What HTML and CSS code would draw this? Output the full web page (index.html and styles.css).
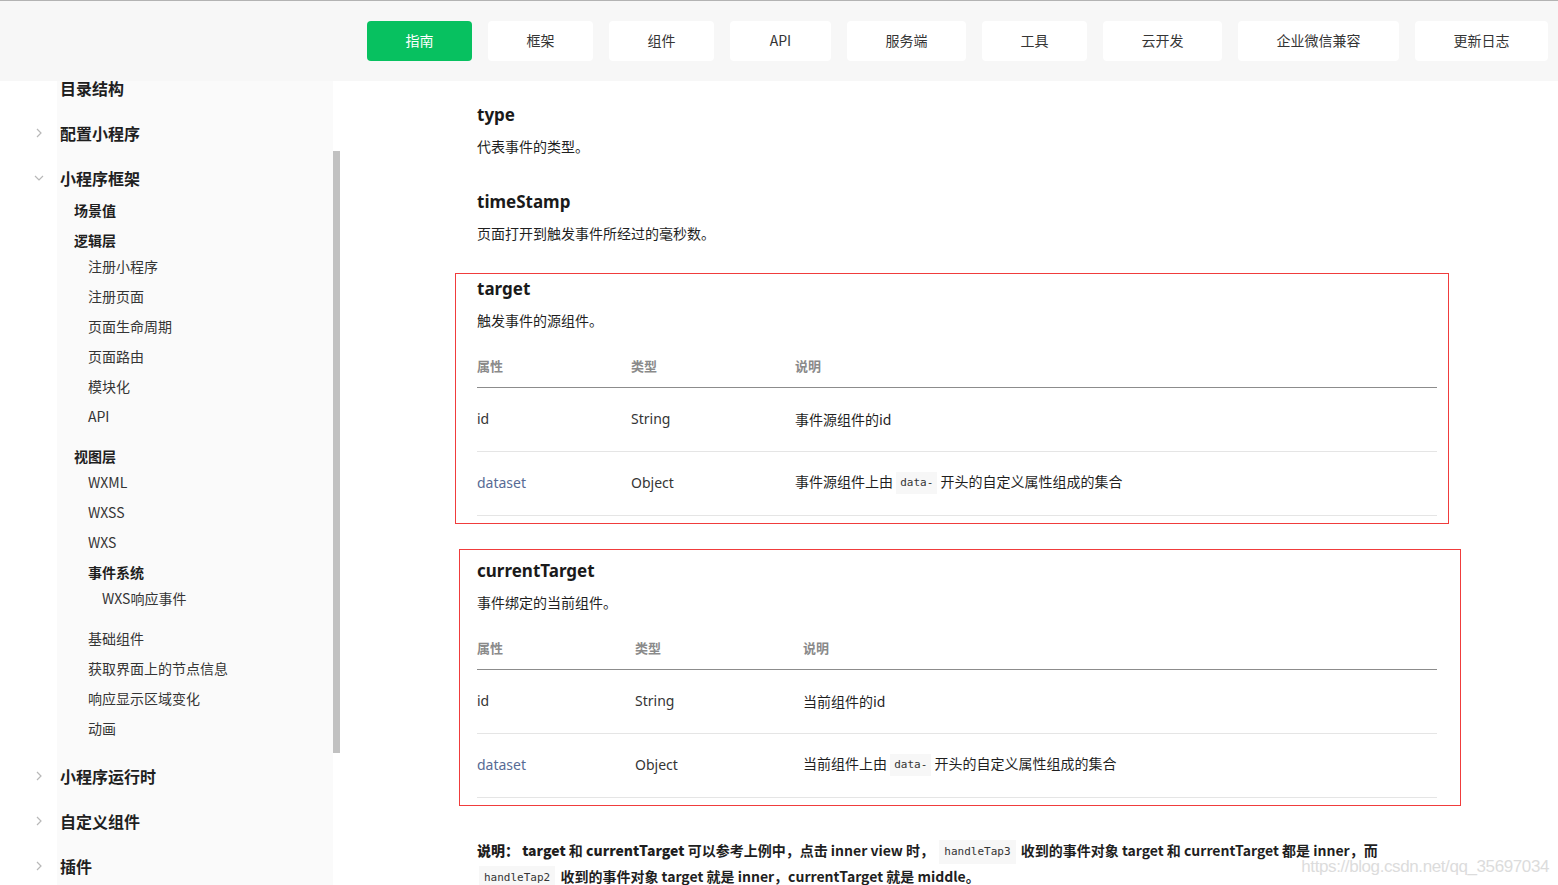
FILE: index.html
```html
<!DOCTYPE html>
<html lang="zh-CN">
<head>
<meta charset="utf-8">
<title>事件 | 微信开放文档</title>
<link rel="stylesheet" href="styles.css">
</head>
<body>
<div class="topline"></div>
<header class="header">
  <nav class="nav">
    <a class="nav-btn is-active">指南</a>
    <a class="nav-btn">框架</a>
    <a class="nav-btn">组件</a>
    <a class="nav-btn">API</a>
    <a class="nav-btn">服务端</a>
    <a class="nav-btn">工具</a>
    <a class="nav-btn">云开发</a>
    <a class="nav-btn">企业微信兼容</a>
    <a class="nav-btn">更新日志</a>
  </nav>
</header>

<div class="layout">
  <aside class="sidebar">
    <ul class="toc">
      <li class="toc-top"><span class="chev-slot"></span>目录结构</li>
      <li class="toc-top"><span class="chev-slot"><svg width="6" height="10" viewBox="0 0 6 10"><polyline points="1,1 5,5 1,9" fill="none" stroke="#b8b8b8" stroke-width="1.2"/></svg></span>配置小程序</li>
      <li>
        <div class="toc-top"><span class="chev-slot chev-down"><svg width="10" height="6" viewBox="0 0 10 6"><polyline points="1,1 5,5 9,1" fill="none" stroke="#b8b8b8" stroke-width="1.2"/></svg></span>小程序框架</div>
        <ul class="toc-sub">
          <li class="toc-row lvl2 strong">场景值</li>
          <li class="toc-group">
            <div class="toc-row lvl2 strong head">逻辑层</div>
            <ul>
              <li class="toc-row lvl3">注册小程序</li>
              <li class="toc-row lvl3">注册页面</li>
              <li class="toc-row lvl3">页面生命周期</li>
              <li class="toc-row lvl3">页面路由</li>
              <li class="toc-row lvl3">模块化</li>
              <li class="toc-row lvl3">API</li>
            </ul>
          </li>
          <li class="toc-group">
            <div class="toc-row lvl2 strong head">视图层</div>
            <ul>
              <li class="toc-row lvl3">WXML</li>
              <li class="toc-row lvl3">WXSS</li>
              <li class="toc-row lvl3">WXS</li>
              <li class="toc-group">
                <div class="toc-row lvl3 strong head">事件系统</div>
                <ul>
                  <li class="toc-row lvl4">WXS响应事件</li>
                </ul>
              </li>
              <li class="toc-row lvl3">基础组件</li>
              <li class="toc-row lvl3">获取界面上的节点信息</li>
              <li class="toc-row lvl3">响应显示区域变化</li>
              <li class="toc-row lvl3">动画</li>
            </ul>
          </li>
        </ul>
      </li>
      <li class="toc-top"><span class="chev-slot"><svg width="6" height="10" viewBox="0 0 6 10"><polyline points="1,1 5,5 1,9" fill="none" stroke="#b8b8b8" stroke-width="1.2"/></svg></span>小程序运行时</li>
      <li class="toc-top"><span class="chev-slot"><svg width="6" height="10" viewBox="0 0 6 10"><polyline points="1,1 5,5 1,9" fill="none" stroke="#b8b8b8" stroke-width="1.2"/></svg></span>自定义组件</li>
      <li class="toc-top"><span class="chev-slot"><svg width="6" height="10" viewBox="0 0 6 10"><polyline points="1,1 5,5 1,9" fill="none" stroke="#b8b8b8" stroke-width="1.2"/></svg></span>插件</li>
    </ul>
    <div class="scroll-thumb"></div>
  </aside>

  <main class="content">
    <section class="field first">
      <h3>type</h3>
      <p>代表事件的类型。</p>
    </section>
    <section class="field">
      <h3>timeStamp</h3>
      <p>页面打开到触发事件所经过的毫秒数。</p>
    </section>

    <section class="mark mark-one">
      <h3>target</h3>
      <p>触发事件的源组件。</p>
      <table class="props props-one">
        <thead>
          <tr><th class="c1">属性</th><th class="c2">类型</th><th>说明</th></tr>
        </thead>
        <tbody>
          <tr><td>id</td><td>String</td><td class="desc">事件源组件的id</td></tr>
          <tr><td class="link">dataset</td><td>Object</td><td class="desc">事件源组件上由 <code>data-</code> 开头的自定义属性组成的集合</td></tr>
        </tbody>
      </table>
    </section>

    <section class="mark mark-two">
      <h3>currentTarget</h3>
      <p>事件绑定的当前组件。</p>
      <table class="props props-two">
        <thead>
          <tr><th class="c1">属性</th><th class="c2">类型</th><th>说明</th></tr>
        </thead>
        <tbody>
          <tr><td>id</td><td>String</td><td class="desc">当前组件的id</td></tr>
          <tr><td class="link">dataset</td><td>Object</td><td class="desc">当前组件上由 <code>data-</code> 开头的自定义属性组成的集合</td></tr>
        </tbody>
      </table>
    </section>

    <p class="note"><strong>说明：</strong> <strong>target</strong> 和 <strong>currentTarget</strong> 可以参考上例中，点击 inner view 时， <code>handleTap3</code> 收到的事件对象 target 和 currentTarget 都是 inner，而 <code>handleTap2</code> 收到的事件对象 target 就是 inner，currentTarget 就是 middle。</p>
  </main>
</div>

<div class="watermark">https://blog.csdn.net/qq_35697034</div>
</body>
</html>
```

FILE: styles.css
```css
html, body {
  height: 100%;
  overflow: hidden;
}

body {
  margin: 0;
  position: relative;
  background: #fff;
  font-family: "Noto Sans", "Noto Sans CJK SC", sans-serif;
  color: #353535;
}

ul {
  list-style: none;
  margin: 0;
  padding: 0;
}

.topline {
  height: 1px;
  background: #b3b3b3;
}

.header {
  position: relative;
  z-index: 2;
  height: 80px;
  background: #f7f7f7;
  display: flex;
  align-items: center;
}

.nav {
  display: flex;
  gap: 16px;
  padding-left: 367px;
}

.nav-btn {
  box-sizing: border-box;
  display: flex;
  align-items: center;
  justify-content: center;
  height: 40px;
  min-width: 101px;
  padding: 0 38.5px 3px;
  background: #fff;
  border-radius: 4px;
  font-family: "Noto Sans CJK SC", sans-serif;
  font-size: 14px;
  line-height: 20px;
  color: #353535;
}

.nav-btn.is-active {
  background: #07c160;
  color: #fff;
}

.layout {
  display: flex;
  align-items: flex-start;
}

/* ---------- sidebar ---------- */
.sidebar {
  position: relative;
  width: 340px;
  flex: none;
  height: 804px;
  background: linear-gradient(to right, #fff 57px, #fafafa 57px, #fafafa 333px, #fff 333px);
  font-family: "Noto Sans CJK SC", sans-serif;
}

.toc {
  margin-top: -16px;
}

.toc-top {
  display: flex;
  align-items: center;
  height: 45px;
  padding-left: 36px;
  font-size: 16px;
  font-weight: 700;
  color: #1f1f1f;
}

.chev-slot {
  width: 24px;
  display: flex;
  align-items: center;
}

.chev-down {
  margin-left: -2px;
  width: 26px;
}

.toc-sub {
  margin-top: -5px;
}

.toc-row {
  height: 30px;
  line-height: 30px;
  font-size: 14px;
  color: #353535;
  white-space: nowrap;
}

.toc-row.strong {
  font-weight: 700;
  color: #1f1f1f;
}

.toc-row.head {
  margin-bottom: -4px;
}

.toc-group {
  margin-bottom: 10px;
}

.lvl2 { padding-left: 74px; }
.lvl3 { padding-left: 88px; }
.lvl4 { padding-left: 102px; }

.scroll-thumb {
  position: absolute;
  left: 333px;
  top: 70px;
  width: 7px;
  height: 602px;
  background: #c1c1c1;
}

/* ---------- content ---------- */
.content {
  flex: 1;
  padding: 22px 0 0 137px;
}

.content h3 {
  margin: 0 0 8px;
  font-size: 17px;
  line-height: 24px;
  font-weight: 700;
  color: #1a1a1a;
}

.content p {
  margin: 0;
  font-size: 14px;
  line-height: 22px;
  font-family: "Noto Sans CJK SC", sans-serif;
  color: #1f1f1f;
}

.field + .field {
  margin-top: 33px;
}

.mark {
  border: 1px solid #f03c3c;
}

.mark-one {
  width: 960px;
  margin: 29px 0 0 -22px;
  padding: 3px 11px 7px 21px;
}

.mark-two {
  width: 960px;
  margin: 25px 0 0 -18px;
  padding: 9px 23px 7px 17px;
}

.props {
  width: 960px;
  margin-top: 14px;
  border-collapse: collapse;
  font-size: 14px;
}

.props th {
  height: 40px;
  padding: 0 0 2px;
  text-align: left;
  vertical-align: middle;
  font-family: "Noto Sans CJK SC", sans-serif;
  font-size: 13px;
  font-weight: 700;
  color: #8a8a8a;
  border-bottom: 1px solid #8c8c8c;
}

.props-one .c1 { width: 154px; }
.props-one .c2 { width: 164px; }
.props-two .c1 { width: 158px; }
.props-two .c2 { width: 168px; }

.props td {
  height: 61px;
  padding: 0 0 2px;
  vertical-align: middle;
  color: #353535;
  border-bottom: 1px solid #e5e5e5;
}

.props td.desc {
  font-family: "Noto Sans CJK SC", sans-serif;
  color: #1f1f1f;
}

.props td.link {
  color: #576b95;
}

code {
  display: inline-block;
  padding: 0 4px;
  line-height: 22px;
  background: #f7f7f7;
  font-family: "DejaVu Sans Mono", "Liberation Mono", monospace;
  font-size: 11px;
  color: #353535;
  vertical-align: middle;
}

.content p.note {
  width: 960px;
  margin-top: 32px;
  line-height: 24px;
  font-weight: 700;
  color: #1f1f1f;
}

.note code {
  font-weight: 400;
  line-height: 24px;
  padding: 0 5px;
  margin: 0 2px;
}

.watermark {
  position: absolute;
  right: 9px;
  bottom: 8px;
  font-family: "Liberation Sans", sans-serif;
  font-size: 17px;
  letter-spacing: -0.4px;
  color: #dcdcdc;
  text-shadow: 0 0 1px #fff;
}
```
